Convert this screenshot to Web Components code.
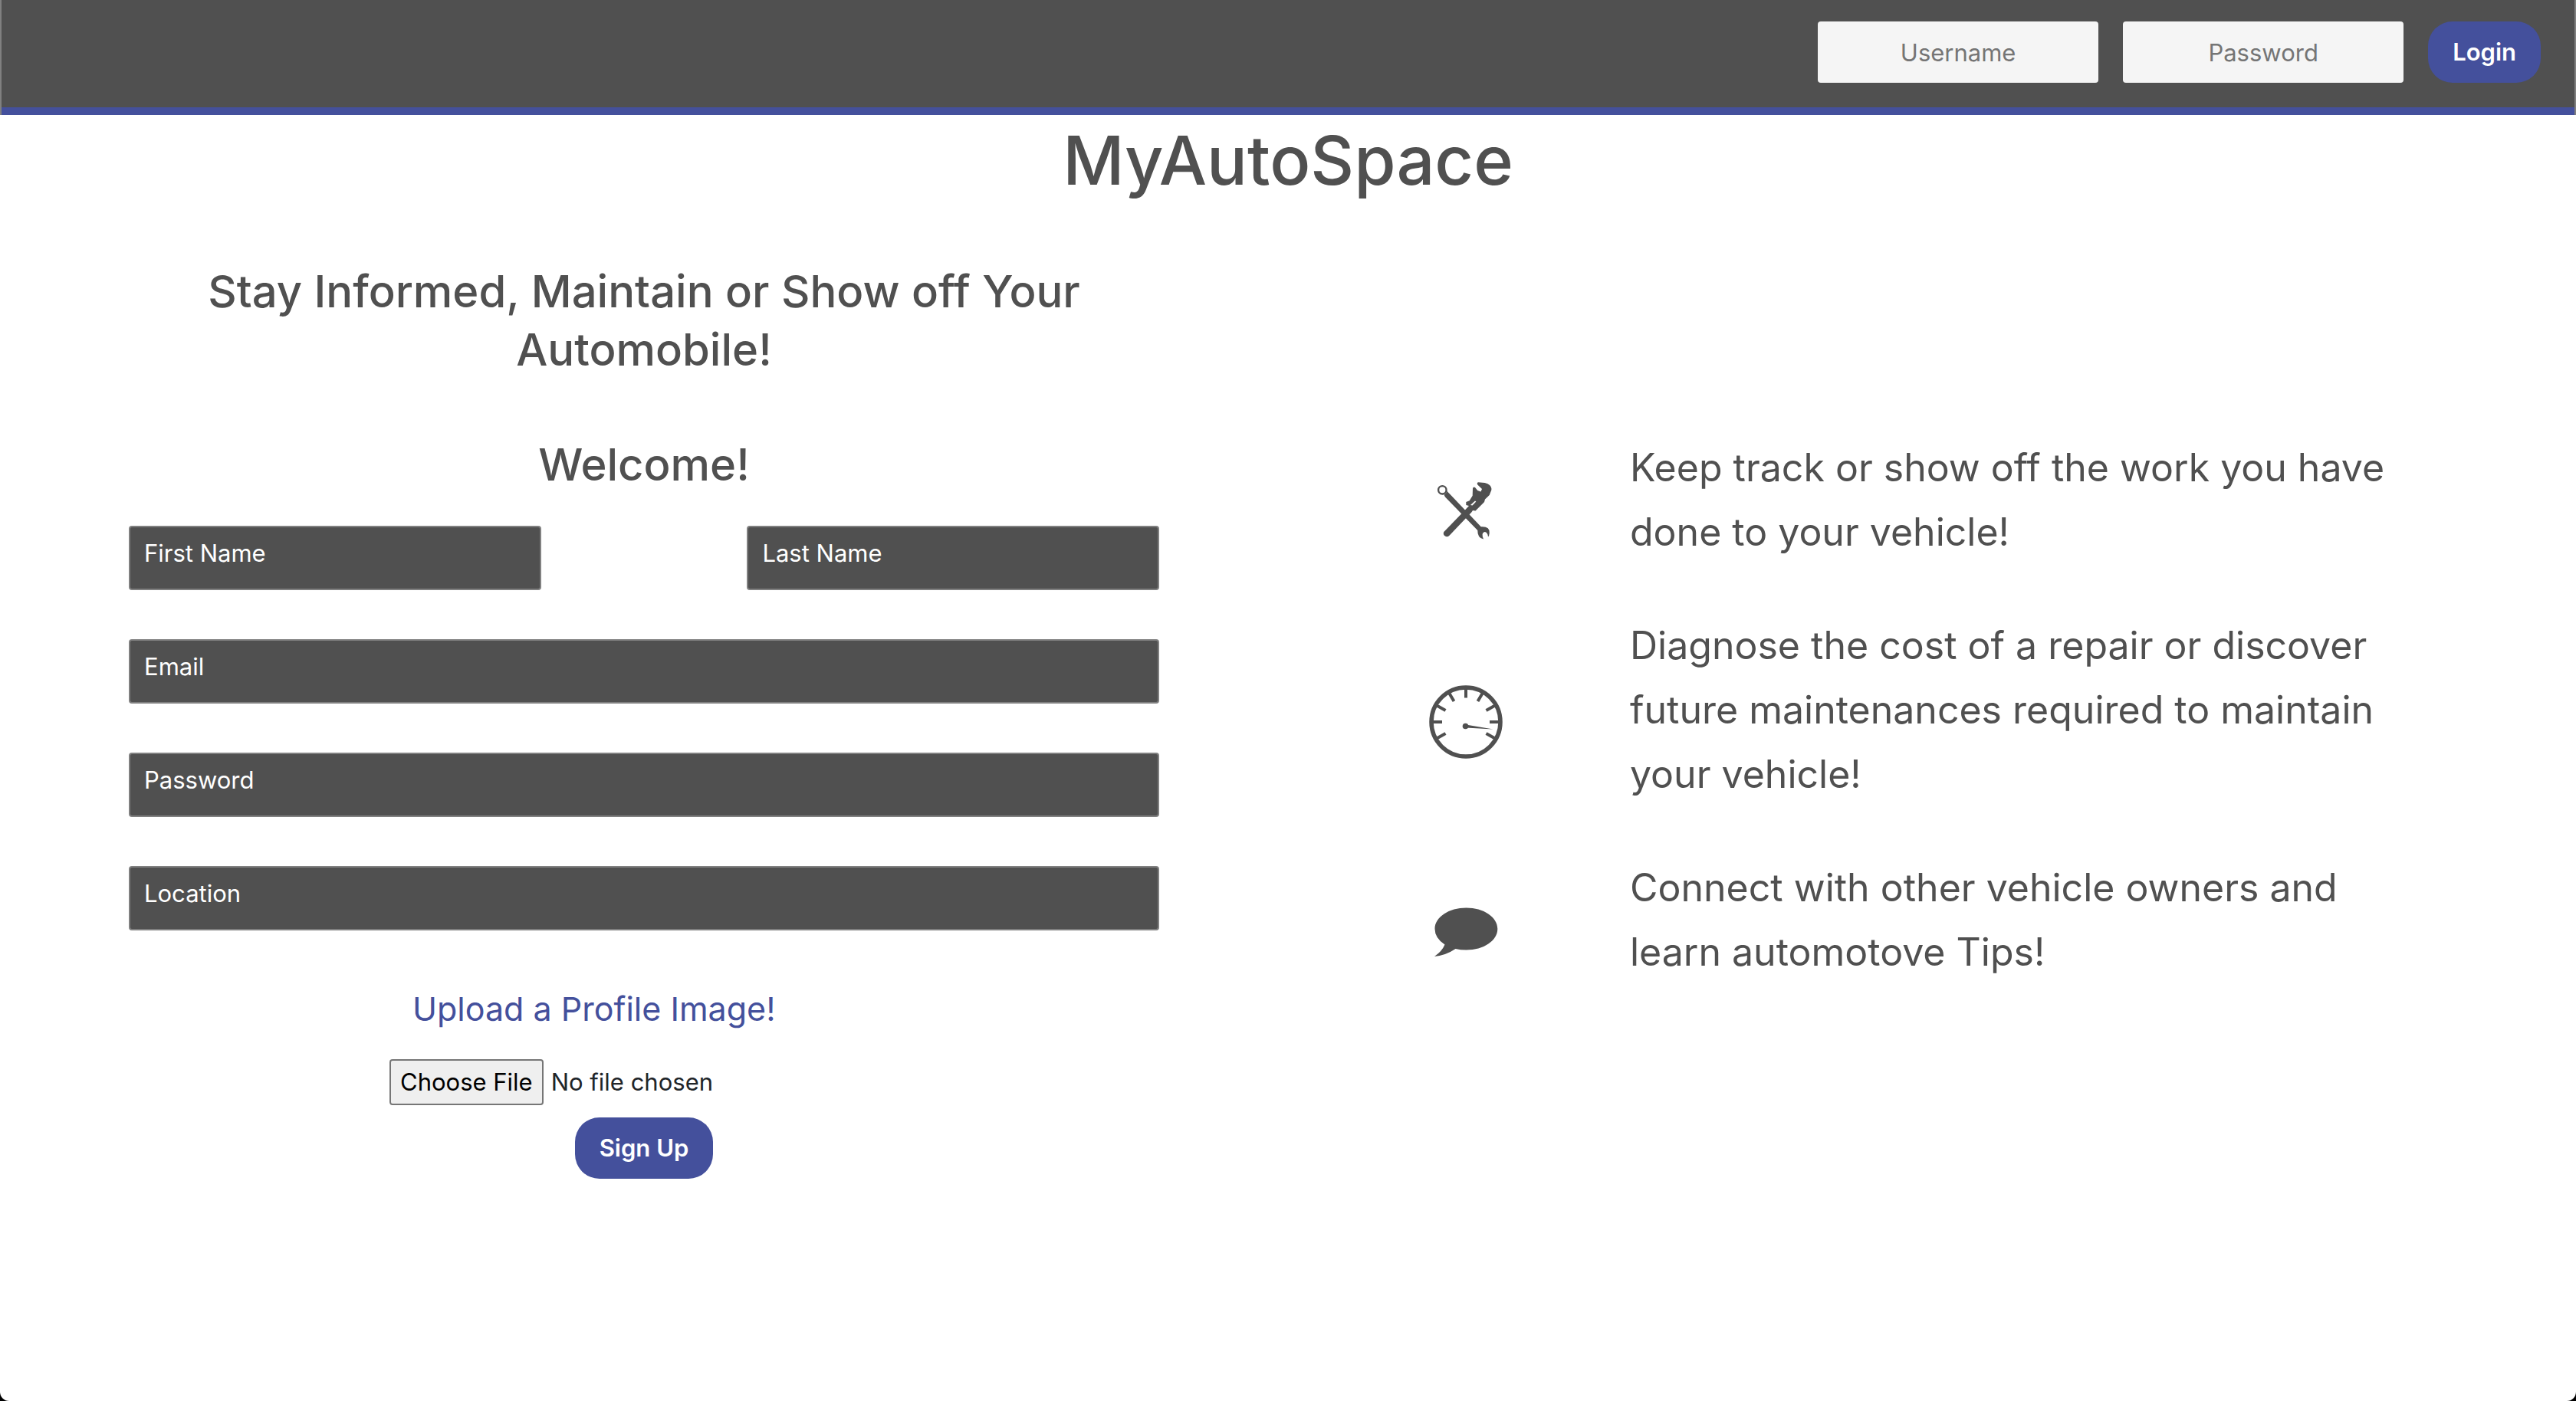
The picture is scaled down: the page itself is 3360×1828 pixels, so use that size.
<!DOCTYPE html>
<html lang="en">
<head>
<meta charset="utf-8">
<title>MyAutoSpace</title>
<style>
  html { background: #000; }
  body { margin: 0; min-height: 100vh; background: #fff; border-radius: 0 0 12px 12px; font-family: Inter, "Liberation Sans", sans-serif; font-size: 31px; line-height: 48px; color: #505050;
    --dark: #505050; --brand: #44509c; --muted: #757575; }
</style>
</head>
<body>
<auto-app></auto-app>
<script>
const define = (name, html, setup) => customElements.define(name, class extends HTMLElement {
  constructor() {
    super();
    const t = document.createElement('template');
    t.innerHTML = html;
    this.attachShadow({ mode: 'open' }).append(t.content.cloneNode(true));
  }
  connectedCallback() { if (setup) setup(this, this.shadowRoot); }
});

define('auto-button', `
<style>
  :host { display: block; }
  button { display: block; height: 80px; padding: 0 32px; border: 0; border-radius: 32px; background: var(--brand); color: #fff; font: inherit; font-weight: 600; white-space: nowrap; }
</style>
<button type="button"><slot></slot></button>`);

define('login-field', `
<style>
  :host { display: block; width: 366px; }
  input { display: block; box-sizing: border-box; width: 100%; height: 80px; padding: 0 16px; border: 0; border-radius: 4px; background: #f5f5f5; font: inherit; text-align: center; }
  input::placeholder { color: var(--muted); opacity: 1; }
</style>
<input>`, (host, root) => {
  const input = root.querySelector('input');
  input.type = host.getAttribute('type') || 'text';
  input.placeholder = host.getAttribute('label');
  input.setAttribute('aria-label', host.getAttribute('label'));
});

define('form-field', `
<style>
  :host { display: block; }
  input { display: block; box-sizing: border-box; width: 100%; height: 84px; padding: 0 18px 14px; border: 2px solid #808080; border-radius: 4px; background: var(--dark); color: #fff; font: inherit; }
  input::placeholder { color: #fff; opacity: 1; }
</style>
<input>`, (host, root) => {
  const input = root.querySelector('input');
  input.type = host.getAttribute('type') || 'text';
  input.placeholder = host.getAttribute('label');
  input.setAttribute('aria-label', host.getAttribute('label'));
});

define('nav-bar', `
<style>
  :host { display: block; border: solid #808080; border-width: 0 2px; }
  header { display: flex; justify-content: flex-end; gap: 32px; padding: 28px 44px 32px; background: var(--dark); border-bottom: 10px solid var(--brand); }
</style>
<header>
  <login-field label="Username"></login-field>
  <login-field label="Password" type="password"></login-field>
  <auto-button>Login</auto-button>
</header>`);

define('sign-up', `
<style>
  :host { display: block; box-sizing: border-box; padding: 0 10%; }
  h2 { margin: 0; text-align: center; font-size: 58px; font-weight: 500; line-height: 76px; }
  .intro { margin: 0 0 74px; }
  form { display: grid; gap: 64px; margin-top: 42px; }
  .names { display: grid; grid-template-columns: 40% 40%; justify-content: space-between; }
  .upload { display: grid; justify-items: start; gap: 34px; margin-top: 6px; padding-left: 340px; }
  label { padding-left: 30px; font-size: 43px; line-height: 64px; color: var(--brand); }
  input { font: inherit; color: #212529; }
  input::file-selector-button { box-sizing: border-box; height: 60px; margin: 0 10px 0 0; padding: 0 12px; border: 2px solid #767676; border-radius: 4px; background: #efefef; color: #000; font: inherit; }
  .actions { display: flex; justify-content: center; margin-top: -48px; }
</style>
<h2 class="intro">Stay Informed, Maintain or Show off Your Automobile!</h2>
<h2>Welcome!</h2>
<form>
  <div class="names">
    <form-field label="First Name"></form-field>
    <form-field label="Last Name"></form-field>
  </div>
  <form-field label="Email" type="email"></form-field>
  <form-field label="Password" type="password"></form-field>
  <form-field label="Location"></form-field>
  <div class="upload">
    <label for="photo">Upload a Profile Image!</label>
    <input id="photo" type="file">
  </div>
  <div class="actions"><auto-button>Sign Up</auto-button></div>
</form>`);

define('feature-list', `
<style>
  :host { display: flex; align-items: flex-start; box-sizing: border-box; gap: 166px; padding: 226px 218px 0 184px; }
  .icons { display: grid; gap: 178px; margin-top: 52px; }
  svg { display: block; width: 96px; height: 96px; color: var(--dark); }
  .text { flex: 1; display: grid; gap: 64px; }
  p { margin: 0; font-size: 50px; line-height: 84px; }
</style>
<div class="icons">
  <svg viewBox="0 0 96 96" fill="currentColor" aria-hidden="true">
    <circle cx="17.300" cy="19.300" r="5.200" fill="none" stroke="currentColor" stroke-width="2.300"/>
    <path d="M22.500 17.500L24 21.500 26.500 24 67.700 67.300Q79.500 66.500 78.700 75.500Q78.500 79 77 80.500Q76.500 74.500 72.500 74Q67.500 75 71 83.500Q63 82 63.300 72L21 28.500 19.500 25.500 16.500 25.500A5.500 5.500 0 0 0 22.500 17.500Z"/>
    <path d="M64 9.300L72.700 10Q77 11 79 13Q82 16 81.300 19.500L78.700 26 73 31.500 72 35 60.500 46.500 57 46 55.300 48.500 26 79.300A4.400 4.400 0 0 1 19.300 74L44.300 48.300 52 40 48.300 39V35L52.700 33.300 56.700 26.700 57 17Q58 14.500 60 16L63.300 20 67.500 21.500 69 18 63.300 12.500Q62 10 64 9.300Z"/>
    <path d="M54 39L60 33.500 61.300 34.500 56.500 39.500Z" fill="#fff"/>
  </svg>
  <svg viewBox="0 0 96 96" fill="none" stroke="currentColor" aria-hidden="true">
    <circle cx="48" cy="48" r="45" stroke-width="5.500"/>
    <path stroke-width="4" d="M48 5v11.500M26 10l6.500 11M70 10l-6.500 11M10 26.500l11.500 6.500M86 26.500l-11.500 6.500M5 48h12M91 48h-12M10 69.500l11.500-6.500M86 69.500l-11.500-6.500"/>
    <circle cx="47.500" cy="53.500" r="3.800" fill="currentColor" stroke="none"/>
    <path fill="currentColor" stroke="none" d="M48 51.500L83.500 57.500 48 55.500z"/>
  </svg>
  <svg viewBox="0 0 96 96" fill="currentColor" aria-hidden="true">
    <path d="M48.500 16.500C71 16.500 89.300 28.500 89.300 44S71 71.500 48.500 71.500Q41 71.500 34.500 70Q22 78.500 7 80Q17 73 20.500 64.500Q7.500 56 7.500 44C7.500 28.500 26 16.500 48.500 16.500Z"/>
  </svg>
</div>
<div class="text">
  <p>Keep track or show off the work you have done to your vehicle!</p>
  <p>Diagnose the cost of a repair or discover future maintenances required to maintain your vehicle!</p>
  <p>Connect with other vehicle owners and learn automotove Tips!</p>
</div>`);

define('auto-app', `
<style>
  :host { display: block; }
  h1 { margin: 0; padding-top: 2px; text-align: center; font-size: 88px; font-weight: 500; line-height: 114px; }
  main { display: grid; grid-template-columns: 1fr 1fr; padding-top: 76px; }
</style>
<nav-bar></nav-bar>
<h1>MyAutoSpace</h1>
<main>
  <sign-up></sign-up>
  <feature-list></feature-list>
</main>`);
</script>
</body>
</html>
